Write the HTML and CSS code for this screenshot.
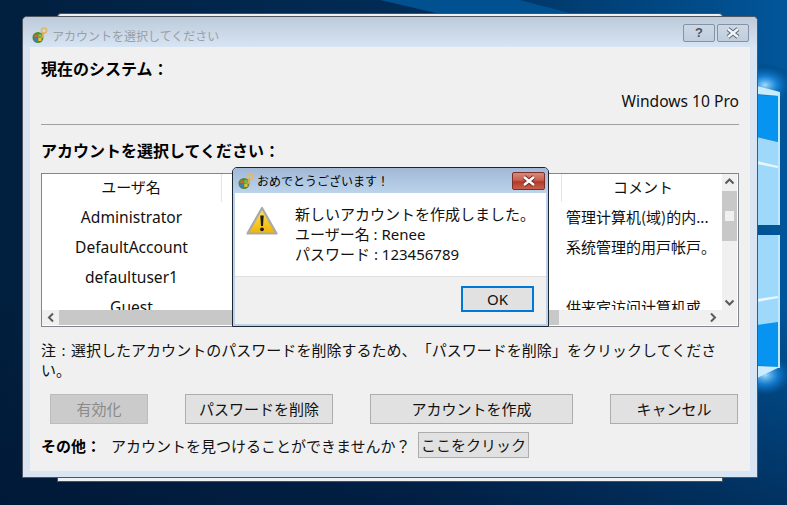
FILE: index.html
```html
<!DOCTYPE html>
<html lang="ja">
<head>
<meta charset="utf-8">
<title>アカウントを選択してください</title>
<link rel="stylesheet" href="styles.css">
</head>
<body>
<div class="desktop">
  <svg class="wallpaper" viewBox="0 0 787 505" width="787" height="505" aria-hidden="true">
    <defs>
      <linearGradient id="wall" x1="0" y1="0.5" x2="1" y2="0.5">
        <stop offset="0" stop-color="#011f3e"/>
        <stop offset="0.55" stop-color="#012d58"/>
        <stop offset="1" stop-color="#01569a"/>
      </linearGradient>
      <linearGradient id="shade" x1="0" y1="0" x2="0" y2="1">
        <stop offset="0" stop-color="#011433" stop-opacity="0"/>
        <stop offset="1" stop-color="#011433" stop-opacity="0.55"/>
      </linearGradient>
      <radialGradient id="glow">
        <stop offset="0" stop-color="#9fdcff"/>
        <stop offset="0.5" stop-color="#1a8fe8" stop-opacity="0.7"/>
        <stop offset="1" stop-color="#0a6fc4" stop-opacity="0"/>
      </radialGradient>
    </defs>
    <rect width="787" height="505" fill="url(#wall)"/>
    <rect y="300" width="787" height="205" fill="url(#shade)"/>
    <polygon points="380,0 520,0 787,70 787,95" fill="#01508f"/>
    <ellipse cx="765" cy="85" rx="26" ry="18" fill="url(#glow)"/>
    <ellipse cx="765" cy="375" rx="26" ry="20" fill="url(#glow)"/>
    <polygon points="757,95 778,96 778,142 757,137" fill="#0793f0"/>
    <polygon points="757,137 778,142 778,225 757,225" fill="#9ed9fb"/>
    <polygon points="757,161 778,166 778,168 757,164" fill="#e8f7ff"/>
    <polygon points="757,86 780,92 779,96 757,94" fill="#c9ecff"/>
    <rect x="778" y="92" width="2" height="133" fill="#bfe8ff"/>
    <rect x="757" y="235" width="21" height="87" fill="#9ed9fb"/>
    <polygon points="757,299 778,296 778,298 757,302" fill="#e8f7ff"/>
    <polygon points="757,324 778,321 778,367 757,365" fill="#0793f0"/>
    <polygon points="757,322 778,318 778,322 757,325" fill="#9ed9fb"/>
    <polygon points="757,366 780,367 757,378" fill="#c9ecff"/>
    <rect x="778" y="235" width="2" height="133" fill="#bfe8ff"/>
  </svg>

  <div class="win-back"></div>

  <main class="window">
    <header class="titlebar">
      <svg class="appicon" viewBox="0 0 16 16" width="16" height="16" aria-hidden="true">
        <circle cx="6" cy="10.500" r="5.500" fill="#4f8a3a"/>
        <path d="M2.500 7.500h3.200V10H2.500z" fill="#d9662c"/>
        <path d="M6.300 7h3.200v3H6.300z" fill="#7fb63f"/>
        <path d="M2.500 10.600h3.200V14H2.500z" fill="#3e7dc4"/>
        <path d="M6.300 10.600h3.200V14H6.300z" fill="#e7bd3a"/>
        <circle cx="12" cy="3.600" r="2.600" fill="none" stroke="#e3b868" stroke-width="1.700"/>
        <path d="M11.200 6l-1.200 5" stroke="#d9a94b" stroke-width="1.800" fill="none"/>
      </svg>
      <span class="title-text">アカウントを選択してください</span>
      <div class="capbtns">
        <button class="capbtn help" type="button">?</button>
        <button class="capbtn" type="button">
          <svg viewBox="0 0 16 12" width="16" height="12" aria-hidden="true"><path d="M3 2l10 8M13 2L3 10" stroke="#5b6470" stroke-width="4.400"/><path d="M3 2l10 8M13 2L3 10" stroke="#f0f3f7" stroke-width="2.600"/></svg>
        </button>
      </div>
    </header>

    <div class="client">
      <h2 class="heading">現在のシステム：</h2>
      <p class="os">Windows 10 Pro</p>
      <hr class="rule">
      <h2 class="heading second">アカウントを選択してください：</h2>

      <div class="list">
        <div class="list-view">
          <div class="cols head">
            <div class="c1">ユーザ名</div>
            <div class="c2"></div>
            <div class="c3">コメント</div>
          </div>
          <div class="cols"><div class="c1">Administrator</div><div class="c2"></div><div class="c3 zh">管理计算机(域)的内...</div></div>
          <div class="cols"><div class="c1">DefaultAccount</div><div class="c2"></div><div class="c3 zh">系统管理的用户帐户。</div></div>
          <div class="cols"><div class="c1">defaultuser1</div><div class="c2"></div><div class="c3 zh"></div></div>
          <div class="cols"><div class="c1">Guest</div><div class="c2"></div><div class="c3 zh">供来宾访问计算机或</div></div>
        </div>
        <div class="vscroll">
          <svg class="arrow" viewBox="0 0 15 15" width="15" height="15" aria-hidden="true"><path d="M3.500 9.500l4-4 4 4" fill="none" stroke="#5a5a5a" stroke-width="2"/></svg>
          <div class="vtrack"><div class="vthumb"><span class="grip"></span></div></div>
          <svg class="arrow" viewBox="0 0 15 15" width="15" height="15" aria-hidden="true"><path d="M3.500 5.500l4 4 4-4" fill="none" stroke="#5a5a5a" stroke-width="2"/></svg>
        </div>
        <div class="hscroll">
          <svg class="arrow" viewBox="0 0 17 15" width="17" height="15" aria-hidden="true"><path d="M11 3.500l-4 4 4 4" fill="none" stroke="#5a5a5a" stroke-width="2"/></svg>
          <div class="hthumb"></div>
          <svg class="arrow" viewBox="0 0 17 15" width="17" height="15" aria-hidden="true"><path d="M6 3.500l4 4-4 4" fill="none" stroke="#5a5a5a" stroke-width="2"/></svg>
        </div>
      </div>

      <p class="note">注 : 選択したアカウントのパスワードを削除するため、「パスワードを削除」をクリックしてくださ<br>い。</p>

      <div class="actions">
        <button class="btn b1" type="button" disabled>有効化</button>
        <button class="btn b2" type="button">パスワードを削除</button>
        <button class="btn b3" type="button">アカウントを作成</button>
        <button class="btn b4" type="button">キャンセル</button>
      </div>

      <div class="other">
        <strong class="other-label">その他：</strong>
        <span class="other-text">アカウントを見つけることができませんか？</span>
        <button class="btn small" type="button">ここをクリック</button>
      </div>
    </div>
  </main>

  <section class="dialog">
    <header class="dlg-title">
      <svg class="appicon" viewBox="0 0 16 16" width="16" height="16" aria-hidden="true">
        <circle cx="6" cy="10.500" r="5.500" fill="#4f8a3a"/>
        <path d="M2.500 7.500h3.200V10H2.500z" fill="#d9662c"/>
        <path d="M6.300 7h3.200v3H6.300z" fill="#7fb63f"/>
        <path d="M2.500 10.600h3.200V14H2.500z" fill="#3e7dc4"/>
        <path d="M6.300 10.600h3.200V14H6.300z" fill="#e7bd3a"/>
        <circle cx="12" cy="3.600" r="2.600" fill="none" stroke="#e3b868" stroke-width="1.700"/>
        <path d="M11.200 6l-1.200 5" stroke="#d9a94b" stroke-width="1.800" fill="none"/>
      </svg>
      <span class="dlg-title-text">おめでとうございます！</span>
      <button class="dlg-close" type="button">
        <svg viewBox="0 0 16 12" width="16" height="12" aria-hidden="true"><path d="M3 2l10 8M13 2L3 10" stroke="#6d2a20" stroke-width="4.400"/><path d="M3 2l10 8M13 2L3 10" stroke="#fff" stroke-width="2.600"/></svg>
      </button>
    </header>
    <div class="dlg-body">
      <svg class="warn" viewBox="0 0 32 30" width="32" height="30" aria-hidden="true">
        <defs>
          <linearGradient id="warnfill" x1="0" y1="0" x2="0" y2="1">
            <stop offset="0" stop-color="#ffe45c"/>
            <stop offset="1" stop-color="#f0b400"/>
          </linearGradient>
        </defs>
        <path d="M16 2L30.500 27.500H1.500z" fill="url(#warnfill)" stroke="#a9a9a9" stroke-width="2.200" stroke-linejoin="round"/>
        <path d="M14.300 9.500h3.400L17 20h-2z" fill="#1a1a1a"/>
        <circle cx="16" cy="23.300" r="1.900" fill="#1a1a1a"/>
      </svg>
      <div class="dlg-msg">新しいアカウントを作成しました。<br>ユーザー名 : Renee<br>パスワード : 123456789</div>
    </div>
    <footer class="dlg-foot">
      <button class="ok" type="button">OK</button>
    </footer>
  </section>
</div>
</body>
</html>
```

FILE: styles.css
```css
* { box-sizing: border-box; }
html, body { margin: 0; padding: 0; }
body {
  width: 787px;
  height: 505px;
  overflow: hidden;
  font-family: "Noto Sans", "Noto Sans CJK JP", sans-serif;
  font-size: 15px;
  color: #111;
  text-spacing-trim: space-all;
}
button { font: inherit; color: inherit; padding: 0 0 2px; }

.desktop { position: relative; width: 787px; height: 505px; overflow: hidden; }
.wallpaper { position: absolute; left: 0; top: 0; display: block; }

.win-back {
  position: absolute;
  left: 57px; top: 13px;
  width: 666px; height: 469px;
  background: #f0f0f0;
  border: 1px solid #4a4f55;
  border-radius: 4px 4px 0 0;
}

.window {
  position: absolute;
  left: 22px; top: 16px;
  width: 736px; height: 462px;
  display: flex;
  flex-direction: column;
  background: #d9e5f2;
  border: 1px solid #50565e;
  border-radius: 5px 5px 0 0;
}
.titlebar {
  height: 30px;
  flex: none;
  display: flex;
  align-items: center;
  padding: 5px 8px 0 9px;
  background: linear-gradient(#bccad9, #d6e4f3);
  border-radius: 4px 4px 0 0;
}
.appicon { flex: none; display: block; }
.title-text { margin-left: 4px; padding-top: 2px; font-size: 12px; color: #9a9fa5; font-family: "Noto Sans CJK JP", sans-serif; }
.capbtns { margin-left: auto; display: flex; gap: 2px; margin-top: -4px; }
.capbtn {
  width: 32px; height: 18px;
  padding: 0;
  display: flex; align-items: center; justify-content: center;
  background: linear-gradient(#cdd8e5, #bfcddd);
  border: 1px solid #8592a4;
  border-radius: 2px;
}
.help { font-weight: 700; font-size: 13px; line-height: 1; color: #4b545f; font-family: "Liberation Sans", sans-serif; }

.client {
  flex: 1;
  margin: 0 7px 6px;
  padding: 11px 11px 0;
  background: #f0f0f0;
  display: flex;
  flex-direction: column;
}
.heading {
  margin: 0;
  font-size: 16px;
  font-weight: 700;
  line-height: 20px;
  color: #000;
  font-family: "Noto Sans CJK JP", sans-serif;
}
.second { margin-top: 15px; }
.os { margin: 13px 0 0; line-height: 20px; text-align: right; font-size: 15.600px; }
.rule { margin: 13px 0 0; height: 1px; border: 0; background: #a0a0a0; }

.list {
  margin-top: 13px;
  height: 154px;
  flex: none;
  display: grid;
  grid-template-columns: 680px 15px;
  grid-template-rows: 136px 15px;
  background: #fff;
  border: 1px solid #82858c;
  overflow: hidden;
  font-size: 15.600px;
}
.list-view { overflow: hidden; grid-column: 1; grid-row: 1; }
.cols {
  display: grid;
  grid-template-columns: 180px 340px 160px;
  height: 30px;
  line-height: 30px;
  text-align: center;
  white-space: nowrap;
}
.head { height: 28px; line-height: 26px; font-size: 15px; }
.head .c1, .head .c2 { border-right: 1px solid #e5e5e5; }
.head .c3 { padding-left: 2px; }
.c1 { padding-right: 1px; }
.zh { font-family: "Noto Sans CJK SC", sans-serif; font-size: 15px; text-align: left; padding-left: 4px; }
.vscroll {
  grid-column: 2;
  grid-row: 1;
  display: flex;
  flex-direction: column;
  background: #f0f0f0;
}
.vtrack { flex: 1; }
.vthumb {
  height: 50px;
  margin-top: 2px;
  background: #c8c8c8;
  display: flex;
  align-items: center;
  justify-content: center;
}
.grip { width: 9px; height: 10px; background: #f0f0f0; }
.arrow { flex: none; display: block; }
.hscroll {
  grid-column: 1 / 3;
  grid-row: 2;
  display: flex;
  background: #f0f0f0;
}
.hthumb { width: 500px; background: #c8c8c8; }
.hscroll .arrow:last-child { margin-left: auto; margin-right: 15px; }

.note { margin: 13px 0 0; line-height: 20px; white-space: nowrap; word-spacing: 1.500px; letter-spacing: 0.030px; }

.actions {
  margin-top: 14px;
  margin-left: 9px;
  display: flex;
  gap: 37px;
}
.btn {
  flex: none;
  height: 30px;
  background: #e1e1e1;
  border: 1px solid #adadad;
  text-align: center;
}
.btn:disabled { background: #cbcbcb; border-color: #bcbcbc; color: #8a8a8a; }
.b1 { width: 98px; }
.b2 { width: 148px; }
.b3 { width: 203px; }
.b4 { width: 128px; }

.other {
  margin-top: 8px;
  display: flex;
  align-items: center;
  height: 26px;
}
.other-label { font-weight: 700; color: #000; width: 70px; flex: none; }
.other-text { width: 307px; flex: none; white-space: nowrap; }
.small { width: 111px; height: 26px; }

.dialog {
  position: absolute;
  left: 232px; top: 167px;
  width: 317px; height: 160px;
  display: flex;
  flex-direction: column;
  background: #bcd2ea;
  border: 1px solid #1c2530;
  border-radius: 5px 5px 0 0;
  padding: 0 2px 2px;
}
.dlg-title {
  height: 25px;
  flex: none;
  margin: 0 -2px;
  padding: 0 3px 0 5px;
  display: flex;
  align-items: center;
  background: linear-gradient(#a1b9d6, #bcd3ec);
  border-radius: 4px 4px 0 0;
}
.dlg-title-text { margin-left: 3px; font-size: 12px; color: #000; }
.dlg-close {
  margin-left: auto;
  width: 33px; height: 18px;
  padding: 0;
  display: flex; align-items: center; justify-content: center;
  background: linear-gradient(#d68a7c 0, #c9604e 45%, #b23a2a 55%, #c8604c 100%);
  border: 1px solid #7c2f26;
  border-radius: 2px;
}
.dlg-body {
  height: 83px;
  flex: none;
  background: #fff;
  display: flex;
  padding: 11px 0 0 11px;
}
.warn { flex: none; margin-top: 2px; display: block; }
.dlg-msg { margin-left: 17px; line-height: 20px; white-space: nowrap; }
.dlg-foot {
  flex: 1;
  background: #f0f0f0;
  border-top: 1px solid #dfdfdf;
  display: flex;
  justify-content: flex-end;
  align-items: flex-start;
  padding: 9px 12px 0 0;
}
.ok {
  width: 73px; height: 26px;
  background: #e1e1e1;
  border: 2px solid #0078d7;
  line-height: 20px;
  padding: 0;
}
```
